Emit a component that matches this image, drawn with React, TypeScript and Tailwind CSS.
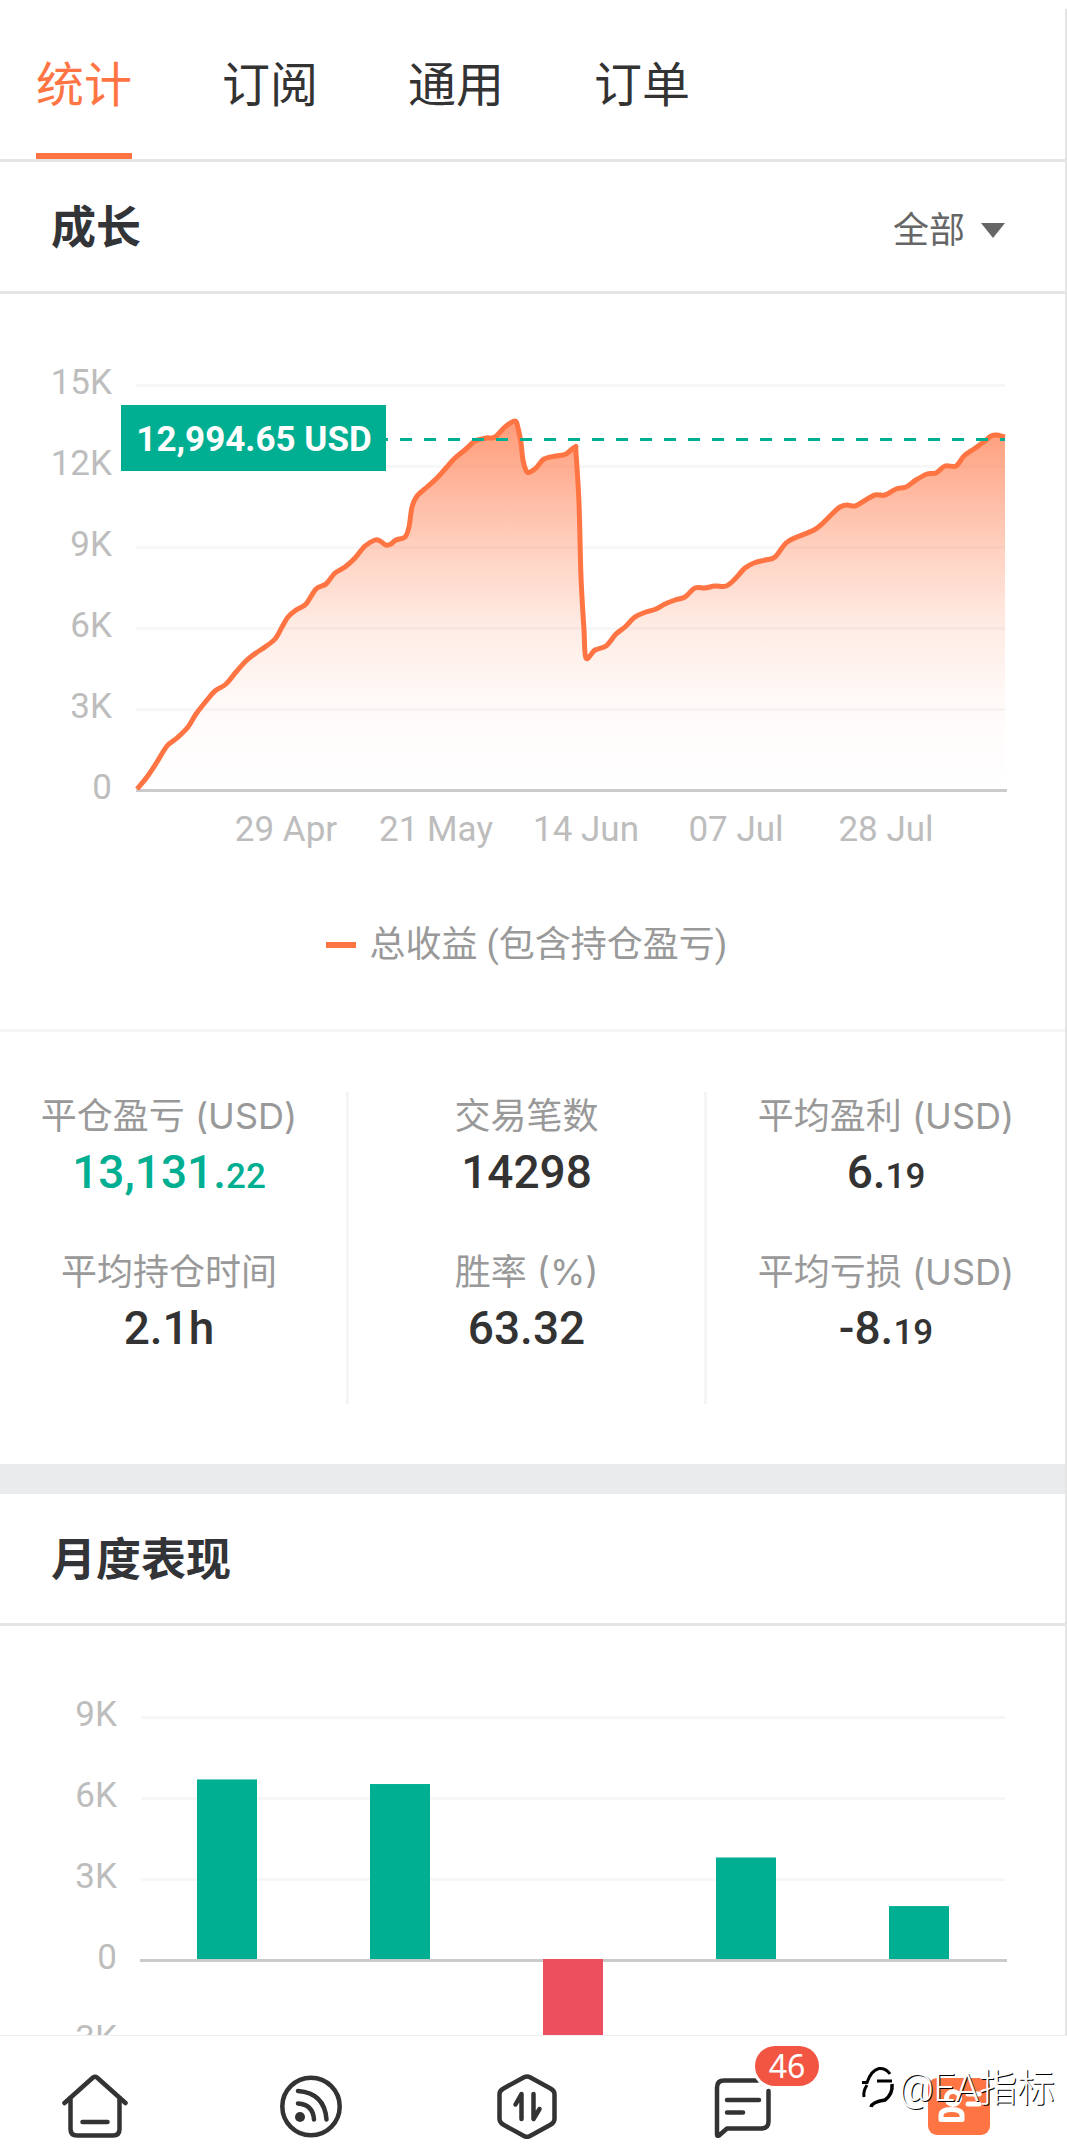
import React, { useState } from "react";

const TABS = ["统计", "订阅", "通用", "订单"];

const STATS = [
    [
        { label: "平仓盈亏 (USD)", value: "13,131.", small: "22", positive: true },
        { label: "平均持仓时间", value: "2.1h" },
    ],
    [
        { label: "交易笔数", value: "14298" },
        { label: "胜率 (%)", value: "63.32" },
    ],
    [
        { label: "平均盈利 (USD)", value: "6.", small: "19" },
        { label: "平均亏损 (USD)", value: "-8.", small: "19" },
    ],
];

// chart units, x from 136 to 1005, 81 units per 3K
const GROWTH: [number, number][] = [
    [137, 495], [147, 483], [157, 468], [167, 452], [177, 444], [188, 433], [196, 420], [207, 406],
    [215, 397], [226, 390], [236, 378], [246, 367], [256, 359], [265, 353], [275, 345], [282, 333],
    [288, 323], [296, 316], [306, 310], [316, 295], [326, 290], [335, 279], [345, 273], [355, 264],
    [365, 252], [375, 246], [380, 247], [386, 251], [391, 250], [396, 246], [405, 243], [409, 233],
    [412, 213], [417, 202], [427, 193], [437, 184], [446, 174], [455, 164], [466, 155], [475, 147],
    [486, 144], [495, 143], [505, 133], [515, 127], [518, 134], [521, 149], [523, 166], [527, 178],
    [532, 177], [537, 173], [544, 165], [556, 162], [566, 160], [575, 153], [576, 159], [579, 209],
    [581, 283], [584, 336], [586, 364], [595, 356], [606, 352], [616, 340], [625, 333], [635, 323],
    [646, 318], [656, 315], [665, 310], [675, 306], [685, 303], [695, 294], [705, 294], [715, 292],
    [726, 292], [735, 285], [745, 274], [754, 269], [765, 266], [775, 263], [786, 249], [797, 243],
    [814, 236], [823, 229], [833, 219], [840, 213], [847, 211], [855, 212], [864, 207], [875, 201],
    [885, 201], [896, 195], [906, 193], [916, 186], [927, 180], [936, 179], [945, 172], [956, 172],
    [964, 162], [974, 155], [985, 147], [991, 142], [997, 141], [1005, 143],
];

const DATES = ["29 Apr", "21 May", "14 Jun", "07 Jul", "28 Jul"];

// monthly result in USD
const MONTHS = [6650, 6480, -3600, 3760, 1960];

function smoothPath(points: [number, number][]) {
    let d = `M${points[0][0]} ${points[0][1]}`;
    for (let i = 0; i < points.length - 1; i++) {
        const p0 = points[Math.max(i - 1, 0)];
        const p1 = points[i];
        const p2 = points[i + 1];
        const p3 = points[Math.min(i + 2, points.length - 1)];
        d += `C${p1[0] + (p2[0] - p0[0]) / 6} ${p1[1] + (p2[1] - p0[1]) / 6} ${p2[0] - (p3[0] - p1[0]) / 6} ${p2[1] - (p3[1] - p1[1]) / 6} ${p2[0]} ${p2[1]}`;
    }
    return d;
}

function GrowthChart() {
    const line = smoothPath(GROWTH);

    return (
        <svg viewBox="0 0 1065 627" className="block w-full font-['Roboto',sans-serif]" role="img" aria-label="成长">
            <defs>
                <linearGradient id="growth" gradientUnits="userSpaceOnUse" x1="0" y1="127" x2="0" y2="495">
                    <stop offset="0" stopColor="#ff7443" stopOpacity="0.72" />
                    <stop offset="0.34" stopColor="#ff7443" stopOpacity="0.34" />
                    <stop offset="0.56" stopColor="#ff7443" stopOpacity="0.14" />
                    <stop offset="0.78" stopColor="#ff7443" stopOpacity="0.03" />
                    <stop offset="1" stopColor="#ff7443" stopOpacity="0" />
                </linearGradient>
            </defs>
            {["15K", "12K", "9K", "6K", "3K", "0"].map((label, i) => (
                <g key={label}>
                    {label !== "0" && <rect x="136" y={90 + i * 81} width="869" height="3" fill="#f7f7f7" />}
                    <text x="112" y={100 + i * 81} textAnchor="end" className="fill-[#bdbdbd] text-[35px]">{label}</text>
                </g>
            ))}
            <path d={`${line}V495H137Z`} fill="url(#growth)" />
            <rect x="136" y="495" width="871" height="3" fill="#cbcbcb" />
            <path d={line} fill="none" stroke="#ff7443" strokeWidth="5" strokeLinejoin="round" />

            {/* Current value */}
            <path d="M376 145.500H1005" stroke="#00ae92" strokeWidth="3" strokeDasharray="12 12" />
            <rect x="121" y="111" width="265" height="66" fill="#00ae92" />
            <text x="254" y="157" textAnchor="middle" className="fill-white text-[35px] font-bold">12,994.65 USD</text>

            {DATES.map((date, i) => (
                <text key={date} x={286 + i * 150} y="547" textAnchor="middle" className="fill-[#bdbdbd] text-[35px]">{date}</text>
            ))}
        </svg>
    );
}

function MonthlyChart() {
    return (
        <svg viewBox="0 0 1065 480" className="block w-full font-['Roboto',sans-serif]" role="img" aria-label="月度表现">
            {["9K", "6K", "3K", "0", "-3K"].map((label, i) => (
                <g key={label}>
                    {i < 3 && <rect x="141" y={90 + i * 81} width="864" height="3" fill="#f7f7f7" />}
                    <text x="117" y={100 + i * 81} textAnchor="end" className="fill-[#bdbdbd] text-[35px]">{label}</text>
                </g>
            ))}
            <rect x="140" y="333" width="867" height="3" fill="#cbcbcb" />
            {MONTHS.map((value, i) => {
                const height = (Math.abs(value) / 3000) * 81;
                return (
                    <rect
                        key={i}
                        x={197 + i * 173}
                        y={value > 0 ? 333 - height : 333}
                        width="60"
                        height={height}
                        fill={value > 0 ? "#00ae92" : "#ec4f5d"}
                    />
                );
            })}
        </svg>
    );
}

function NavIcon({ children }: { children: React.ReactNode }) {
    return (
        <svg viewBox="0 0 66 66" className="size-[66px]" fill="none" stroke="#333" strokeWidth="4.500" strokeLinecap="round" strokeLinejoin="round">
            {children}
        </svg>
    );
}

export default function App() {
    const [tab, setTab] = useState(0);

    return (
        <div className="relative flex h-screen flex-col overflow-hidden bg-white font-['Roboto','Noto_Sans_CJK_SC',sans-serif] text-[#333]">
            <main className="mt-[9px] min-h-0 flex-1 overflow-y-auto border-r-2 border-[#e5e5e5] [scrollbar-width:none]">
                {/* Tabs */}
                <div className="flex h-[153px] gap-[90px] border-b-3 border-[#e5e5e5] pl-9">
                    {TABS.map((name, i) => (
                        <button
                            key={name}
                            onClick={() => setTab(i)}
                            className={`border-y-6 border-t-transparent pt-1 text-5xl ${i === tab ? "border-b-[#ff7443] text-[#ff7443]" : "border-b-transparent"}`}
                        >
                            {name}
                        </button>
                    ))}
                </div>

                {/* Growth */}
                <section>
                    <div className="flex h-[132px] items-center justify-between border-b-3 border-[#e5e5e5] pt-1 pr-[60px] pl-[51px]">
                        <h2 className="text-[45px] font-bold text-[#333438]">成长</h2>
                        <div className="relative flex items-center pt-1">
                            <select aria-label="时间范围" className="w-28 appearance-none bg-transparent text-4xl text-[#666]">
                                <option>全部</option>
                            </select>
                            <svg viewBox="0 0 24 15" className="pointer-events-none absolute right-0 w-6 fill-[#666]">
                                <path d="M0 0H24L12 15Z" />
                            </svg>
                        </div>
                    </div>
                    <GrowthChart />
                    <div className="flex items-center justify-center gap-[14px] border-b-3 border-[#f5f5f5] pr-3 pb-15 text-4xl leading-12 text-[#999]">
                        <span className="h-[6px] w-[30px] bg-[#ff7443]" />
                        总收益 (包含持仓盈亏)
                    </div>
                </section>

                {/* Summary numbers */}
                <section className="grid grid-cols-[349fr_358fr_358fr] py-15 text-center">
                    {STATS.map((column, i) => (
                        <dl key={i} className={i === 2 ? "" : i === 0 ? "border-r-3 border-[#f5f5f5] pr-2" : "border-r-3 border-[#f5f5f5]"}>
                            {column.map((item) => (
                                <div key={item.label} className="pb-11">
                                    <dt className="font-['Inter','Noto_Sans_CJK_SC',sans-serif] text-4xl leading-12 whitespace-nowrap text-[#999]">{item.label}</dt>
                                    <dd className={`text-[46px] leading-16 font-medium ${item.positive ? "text-[#00ae92]" : ""}`}>
                                        {item.value}
                                        {item.small && <span className="text-[35px] leading-none">{item.small}</span>}
                                    </dd>
                                </div>
                            ))}
                        </dl>
                    ))}
                </section>

                {/* Monthly */}
                <section className="border-t-30 border-[#eaebed]">
                    <div className="flex h-[132px] items-center border-b-3 border-[#e5e5e5] pt-1 pl-[51px]">
                        <h2 className="text-[45px] font-bold text-[#333438]">月度表现</h2>
                    </div>
                    <MonthlyChart />
                </section>
            </main>

            <nav className="h-[113px] border-t border-[#eee]">
                <div className="-ml-[13px] grid grid-cols-5 pt-[37px]">
                    <a href="#home" aria-label="首页" className="flex justify-center">
                        <NavIcon>
                            <path d="M2.500 30L31 4.500Q33 3 35 4.500L63.500 30" />
                            <path d="M8.500 25V56Q8.500 62.500 15 62.500H51Q57.500 62.500 57.500 56V25M20.500 49H45.500" />
                        </NavIcon>
                    </a>
                    <a href="#signals" aria-label="信号" className="flex justify-center">
                        <NavIcon>
                            <circle cx="33" cy="33.500" r="28.700" />
                            <circle cx="22" cy="44" r="5" fill="#333" stroke="none" />
                            <path d="M20 30.500Q35 31.500 36 46.500M20 18Q46.500 20 48.500 46.500" />
                        </NavIcon>
                    </a>
                    <a href="#trade" aria-label="交易" className="flex justify-center">
                        <NavIcon>
                            <path d="M30 4.200Q33 2.600 36 4.200L56.500 15.500Q60.500 17.800 60.500 21V46Q60.500 49.500 56.500 51.800L36 63Q33 64.600 30 63L9.500 51.800Q5.500 49.500 5.500 46V21Q5.500 17.800 9.500 15.500Z" />
                            <path d="M21.500 31.500L27.500 21V46M45.500 36L39.500 46V21" />
                        </NavIcon>
                    </a>
                    <a href="#messages" aria-label="消息" className="flex justify-center">
                        <span className="relative">
                            <NavIcon>
                                <path d="M58.500 18V48.500Q58.500 55.500 51.500 55.500H17L9 62.500Q7 63.500 7 61.500V14.500Q7 7.500 14 7.500H48" />
                                <path d="M17 27H49M17 39.500H33" />
                            </NavIcon>
                            <span className="absolute -top-[27px] left-[45px] flex h-10 w-16 items-center justify-center rounded-full bg-[#f25643] font-['Noto_Sans',sans-serif] text-[32px] text-white ring-3 ring-white">
                                46
                            </span>
                        </span>
                    </a>
                    <a href="#broker" aria-label="经纪商" className="flex justify-center">
                        <svg viewBox="0 0 66 66" className="size-[66px]">
                            <rect x="2" y="5" width="62" height="57" rx="9" fill="#ff7443" />
                            <g fill="none" stroke="#fff" strokeWidth="5">
                                <path d="M15 46.500H36V42.500Q36 36.500 25.500 36.500Q15 36.500 15 42.500Z" strokeLinejoin="round" />
                                <circle cx="27" cy="25" r="6.500" />
                                <path d="M42 21H53M42 31H53" strokeLinecap="round" />
                            </g>
                        </svg>
                    </a>
                </div>
            </nav>

            {/* Watermark */}
            <div className="pointer-events-none absolute right-3 bottom-9 flex items-center gap-1 text-[38px] leading-12 font-light text-white [text-shadow:1px_1px_0_#000]">
                <svg viewBox="0 0 34 42" className="w-[34px]" fill="none" stroke="#000">
                    <path d="M1 15.500H6Q10 3.500 18 1.500Q25 1 29 7" strokeWidth="3" />
                    <path d="M16 14H31M6 18Q2 24 3 30" strokeWidth="3" />
                    <path d="M31 17Q32 27 24 33Q11 35 10 40" strokeWidth="3.500" />
                </svg>
                @EA指标
            </div>
        </div>
    );
}
